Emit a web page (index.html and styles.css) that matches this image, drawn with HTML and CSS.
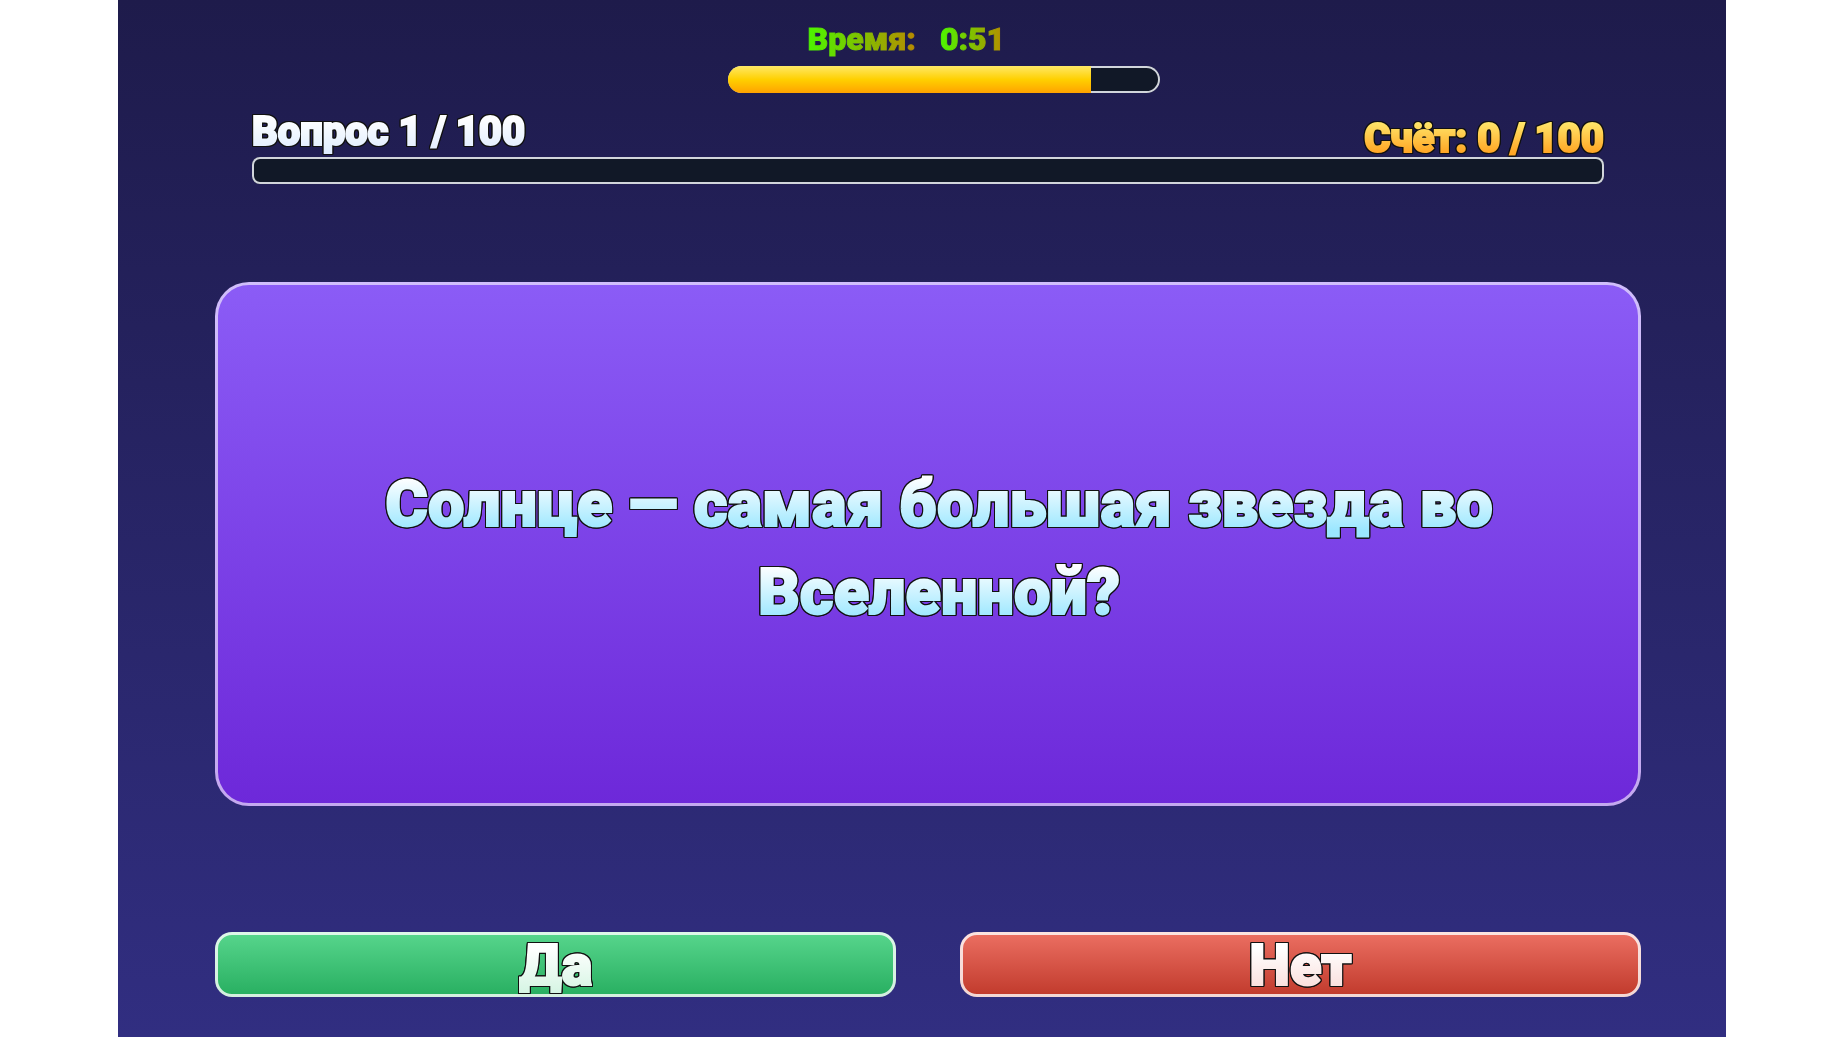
FILE: index.html
```
<!DOCTYPE html>
<html lang="ru">
<head>
  <meta charset="UTF-8">
  <meta name="viewport" content="width=device-width, initial-scale=1.0">
  <title>Викторина</title>
  <link rel="stylesheet" href="styles.css">
</head>
<body>

  <main class="game">
    <div class="timer">
      <p class="timer-text"><span>Время:</span><span>0:51</span></p>
      <div class="bar timer-bar">
        <div class="timer-fill" style="width: 84%"></div>
      </div>
    </div>

    <div class="progress">
      <div class="progress-info">
        <p class="question-count">Вопрос 1 / 100</p>
        <p class="score">Счёт: 0 / 100</p>
      </div>
      <div class="bar"></div>
    </div>

    <div class="card">
      <h1 class="question">Солнце — самая большая звезда во Вселенной?</h1>
    </div>

    <div class="answers">
      <button class="answer yes"><span>Да</span></button>
      <button class="answer no"><span>Нет</span></button>
    </div>
  </main>

</body>
</html>
```

FILE: styles.css
```
* {
  box-sizing: border-box;
  margin: 0;
  padding: 0;
}

body {
  font-family: Roboto, "Open Sans", sans-serif;
  font-weight: 900;
  background-color: #fff;
  min-height: 100vh;
  display: flex;
  justify-content: center;
}

.game {
  width: 87.2%;
  min-height: 100vh;
  padding: 20px 85px 40px 97px;
  background: linear-gradient(#1e1b4b, #312e81);
  display: flex;
  flex-direction: column;
}

.timer {
  width: 432px;
  max-width: 100%;
  margin-left: 36%;
}

.timer-text {
  display: flex;
  justify-content: center;
  gap: 24px;
  height: 46px;
  padding-right: 76px;
  font-size: 32px;
  line-height: 38px;
}

.timer-text span {
  background: linear-gradient(90deg, #4cf500, #b88a00);
  -webkit-background-clip: text;
  background-clip: text;
  -webkit-text-stroke: 1px transparent;
  color: transparent;
}

.bar {
  height: 27px;
  background-color: #111827;
  border-radius: 8px;
  box-shadow: inset 0 0 0 2px #d1d5db;
  overflow: hidden;
}

.timer-bar {
  border-radius: 14px;
}

.timer-fill {
  height: 100%;
  background: linear-gradient(#ffe866, #ffd000 50%, #ffa200);
}

.progress {
  margin: 14px 37px 98px;
}

.progress-info {
  display: flex;
  justify-content: space-between;
  height: 50px;
  font-size: 40px;
  line-height: 50px;
}

/* gradient letters: the clear stroke thickens them, the shadows outline them */
.question-count,
.score,
.question,
.answer span {
  -webkit-background-clip: text;
  background-clip: text;
  -webkit-text-stroke: 2px transparent;
  color: transparent;
  filter: drop-shadow(1px 0 #111) drop-shadow(-1px 0 #111) drop-shadow(0 1px #111) drop-shadow(0 -1px #111);
}

.question-count {
  background-image: linear-gradient(#fff 20%, #dbeafe);
}

.score {
  padding-top: 7px;
  background-image: linear-gradient(#fff176 20%, #ffa726 90%);
}

.card {
  flex: 1;
  display: flex;
  align-items: center;
  justify-content: center;
  padding: 48px 120px 40px 142px;
  background: linear-gradient(#8b5cf6, #6d28d9) border-box;
  border: 3px solid rgba(255, 255, 255, 0.6);
  border-radius: 34px;
}

.question {
  font-size: 65px;
  font-weight: 900;
  line-height: 88px;
  text-align: center;
  background-image: linear-gradient(#fff 20%, #9be7ff 80%);
  background-size: 100% 88px;
}

.answers {
  display: flex;
  gap: 64px;
  margin-top: 126px;
}

.answer {
  flex: 1;
  height: 65px;
  border: 3px solid rgba(255, 255, 255, 0.8);
  border-radius: 17px;
  font-family: inherit;
  font-size: 58px;
  font-weight: 900;
  line-height: 56px;
  cursor: pointer;
}

.answer span {
  display: inline-block;
}

.yes {
  background: linear-gradient(#58d68d, #27ae60) border-box;
}

.yes span {
  background-image: linear-gradient(#fff 20%, #d5f5e3);
}

.no {
  background: linear-gradient(#ec7063, #c0392b) border-box;
}

.no span {
  background-image: linear-gradient(#fff 20%, #fadbd8);
}
```
